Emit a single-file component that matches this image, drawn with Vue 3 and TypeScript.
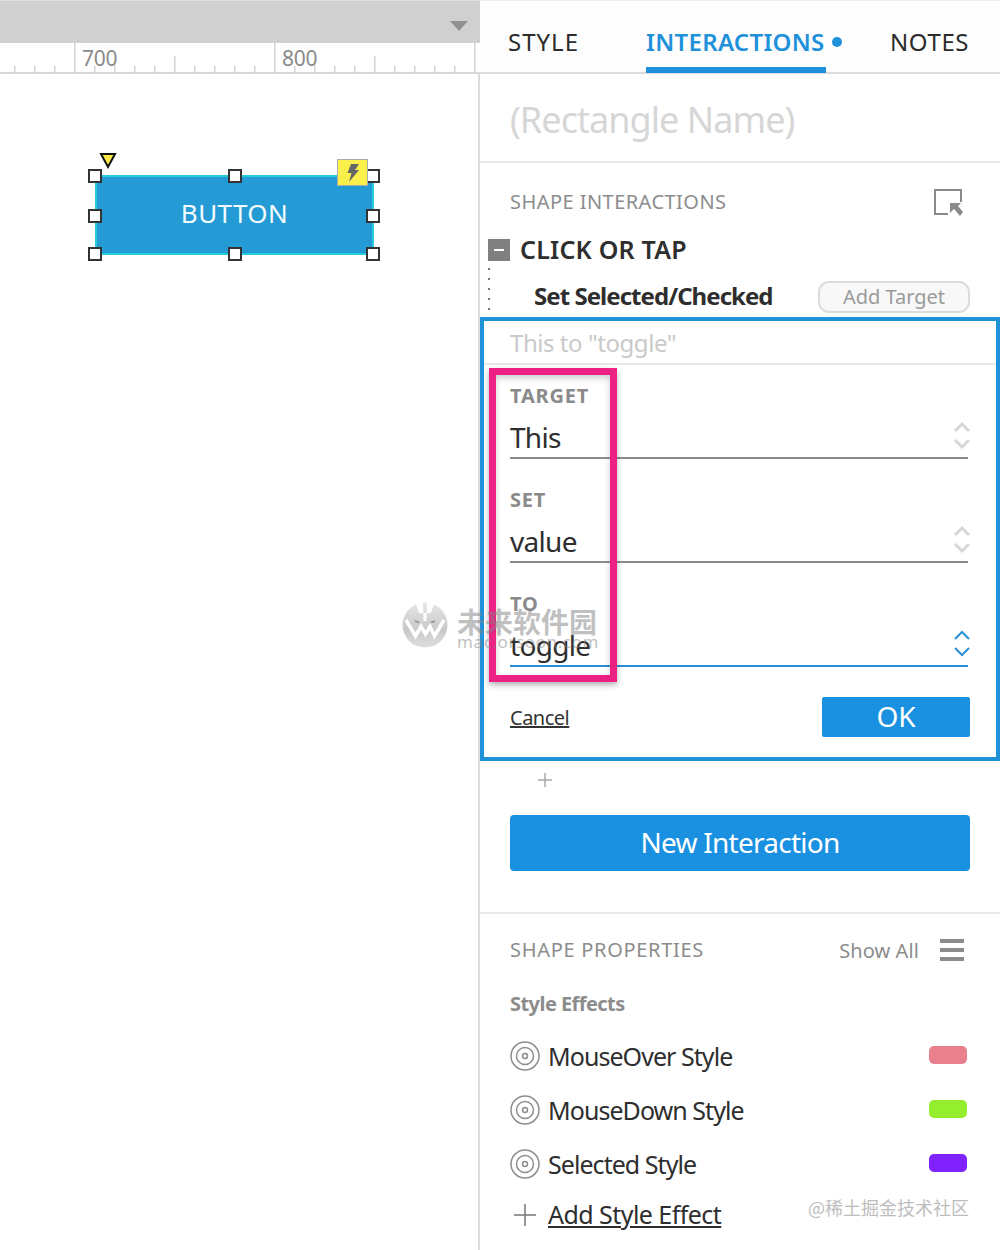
<script setup lang="ts">
const minor: number[] = []
for (let x = 15; x < 478; x += 20) minor.push(x)
const tickClass = (x: number) => {
  const step = (x - 75) / 100
  if (Number.isInteger(step)) return Math.abs(step % 2) === 0 ? 'major' : 'mid'
  return 'minor'
}
const handles = [
  [95, 176], [235, 176], [373, 176],
  [95, 216], [373, 216],
  [95, 254], [235, 254], [373, 254],
]
const fields = [
  { label: 'TARGET', value: 'This', active: false },
  { label: 'SET', value: 'value', active: false },
  { label: 'TO', value: 'toggle', active: true },
]
const effects = [
  { name: 'MouseOver Style', color: '#e8808d' },
  { name: 'MouseDown Style', color: '#94ee2e' },
  { name: 'Selected Style', color: '#7f22fb' },
]
</script>

<template>
  <div class="page">
    <section class="canvas">
      <div class="topbar"><span class="caret"></span></div>
      <div class="ruler">
        <span class="rule-num first">700</span>
        <span class="rule-num second">800</span>
        <svg class="ticks" width="478" height="31" viewBox="0 0 478 31">
          <rect v-for="x in minor" :key="x" :x="x - 1" width="1.500"
            :y="tickClass(x) === 'major' ? 0 : tickClass(x) === 'mid' ? 13 : 23"
            :height="tickClass(x) === 'major' ? 30 : tickClass(x) === 'mid' ? 17 : 7" fill="#d4d4d4" />
        </svg>
      </div>
      <div class="shape">BUTTON</div>
      <span v-for="(h, i) in handles" :key="i" class="handle" :style="{ left: h[0] - 7 + 'px', top: h[1] - 7 + 'px' }"></span>
      <svg class="marker" width="18" height="18" viewBox="0 0 18 18">
        <path d="M2 2 H16 L9 15 Z" fill="#fbe94a" stroke="#111" stroke-width="2" />
      </svg>
      <div class="bolt">
        <svg width="16" height="20" viewBox="0 0 16 20">
          <path d="M6 1 H14 L10 7 H14 L4 19 L6.500 10 H2.500 Z" fill="#666" />
        </svg>
      </div>
    </section>

    <aside class="panel">
      <nav class="tabs">
        <span class="tab tab-style">STYLE</span>
        <span class="tab tab-active">INTERACTIONS<i class="dot"></i></span>
        <span class="tab tab-notes">NOTES</span>
      </nav>
      <div class="name">(Rectangle Name)</div>

      <div class="section-head head-interactions">
        <span class="caption">SHAPE INTERACTIONS</span>
        <svg class="jump" width="30" height="28" viewBox="0 0 30 28">
          <path d="M28 14 V2 H2 V26 H15" fill="none" stroke="#8a8a8a" stroke-width="2" />
          <path d="M17 15 H28 L25 18 L30 24 L27 28 L21 21 L17 25 Z" fill="#8a8a8a" />
        </svg>
      </div>

      <div class="event">
        <span class="minus"><i></i></span>
        <span class="event-name">CLICK OR TAP</span>
      </div>
      <div class="action">
        <span class="dots"></span>
        <span class="action-name">Set Selected/Checked</span>
        <button class="add-target">Add Target</button>
      </div>

      <div class="editor">
        <div class="editor-title">This to "toggle"</div>
        <div class="fields">
          <div v-for="f in fields" :key="f.label" class="field">
            <div class="field-label">{{ f.label }}</div>
            <div class="field-value" :class="{ on: f.active }">
              <span class="value-text">{{ f.value }}</span>
              <svg class="spinner" width="18" height="30" viewBox="0 0 18 30" fill="none"
                :stroke="f.active ? '#2a90d6' : '#d6d6d6'" :stroke-width="f.active ? 2 : 2.800">
                <path d="M2 10 L9 3 L16 10" />
                <path d="M2 19 L9 26 L16 19" />
              </svg>
            </div>
          </div>
        </div>
        <div class="editor-foot">
          <a class="cancel">Cancel</a>
          <button class="ok">OK</button>
        </div>
      </div>

      <div class="plus-row">
        <svg width="16" height="16" viewBox="0 0 16 16"><path d="M8 1 V15 M1 8 H15" stroke="#a8a8a8" stroke-width="1.500" /></svg>
      </div>
      <button class="new-interaction">New Interaction</button>

      <div class="props">
        <div class="section-head head-props">
          <span class="caption">SHAPE PROPERTIES</span>
          <span class="show-all">
            <span>Show All</span>
            <span class="burger"><i></i><i></i><i></i></span>
          </span>
        </div>
        <div class="effects-title">Style Effects</div>
        <div v-for="e in effects" :key="e.name" class="effect">
          <svg width="30" height="30" viewBox="0 0 30 30" fill="none" stroke="#8e8e8e" stroke-width="1.500">
            <circle cx="15" cy="15" r="14" />
            <circle cx="15" cy="15" r="8.500" />
            <circle cx="15" cy="15" r="2.500" />
          </svg>
          <span class="effect-name">{{ e.name }}</span>
          <span class="swatch" :style="{ background: e.color }"></span>
        </div>
        <div class="add-effect">
          <svg width="30" height="24" viewBox="0 0 30 24"><path d="M15 1 V23 M4 12 H26" stroke="#777" stroke-width="1.500" /></svg>
          <a>Add Style Effect</a>
        </div>
      </div>
    </aside>

    <div class="pink"></div>

    <div class="watermark">
      <svg width="48" height="48" viewBox="0 0 48 48">
        <defs>
          <linearGradient id="wm-fill" x1="0" y1="0" x2="0" y2="1">
            <stop offset="0" stop-color="#e6e6e6" />
            <stop offset="0.6" stop-color="#c9c9c9" />
            <stop offset="1" stop-color="#dedede" />
          </linearGradient>
        </defs>
        <circle cx="24" cy="24" r="22.500" fill="url(#wm-fill)" />
        <path d="M14 0 H22 L22.500 20 H25.500 L26 0 H34 L30 12 H18 Z" fill="#fff" />
        <path d="M5 19 L14.500 35 L20 25.500 L24.500 33 L29 25.500 L33.500 35 L43 19" fill="none" stroke="#fff" stroke-width="3.500" />
        <path d="M14 20 L18 21.500 M30 21.500 L34 20" stroke="#8f8f8f" stroke-width="1.500" />
      </svg>
      <div class="wm-text">
        <div class="wm-cn">未来软件园</div>
        <div class="wm-en">mac.orsoon.com</div>
      </div>
    </div>
    <div class="credit">@稀土掘金技术社区</div>
  </div>
</template>

<style>
html, body { margin: 0; background: #fff; }
</style>

<style scoped>
.page {
  position: relative;
  display: flex;
  width: 1000px;
  height: 1250px;
  overflow: hidden;
  background: #fff;
  font-family: "Noto Sans", "Open Sans", sans-serif;
  color: #333;
}
.canvas {
  position: relative;
  width: 478px;
  flex: none;
  border-right: 2px solid #dcdcdc;
}
.topbar {
  position: relative;
  height: 42px;
  margin-right: -2px;
  background: #d0d0d0;
  border-top: 1px solid #dedede;
}
.caret {
  position: absolute;
  left: 450px;
  top: 20px;
  border-left: 9px solid transparent;
  border-right: 9px solid transparent;
  border-top: 10px solid #909090;
}
.ruler {
  position: relative;
  height: 31px;
  box-sizing: border-box;
  margin-right: -2px;
  background: #fff;
  border-bottom: 2px solid #d8d8d8;
}
.ticks { display: block; }
.rule-num {
  position: absolute;
  top: 1px;
  font-size: 21px;
  line-height: 28px;
  color: #8a8a8a;
  letter-spacing: -0.2px;
}
.first { left: 82px; }
.second { left: 282px; }
.shape {
  position: absolute;
  left: 95px;
  top: 175px;
  width: 279px;
  height: 80px;
  box-sizing: border-box;
  padding-bottom: 5px;
  display: flex;
  align-items: center;
  justify-content: center;
  background: #259bd5;
  border: 2px solid #24ccdc;
  color: #f4fbff;
  font-size: 26px;
  letter-spacing: 0.4px;
}
.handle {
  position: absolute;
  width: 14px;
  height: 14px;
  box-sizing: border-box;
  background: #fff;
  border: 2px solid #333;
}
.marker { position: absolute; left: 99px; top: 152px; }
.bolt {
  position: absolute;
  left: 337px;
  top: 159px;
  width: 31px;
  height: 27px;
  box-sizing: border-box;
  background: #fbef4c;
  border: 1px solid #aaa;
  display: flex;
  align-items: center;
  justify-content: center;
}
.panel {
  flex: 1;
  min-width: 0;
  background: #fff;
}
.tabs {
  height: 74px;
  box-sizing: border-box;
  border-bottom: 2px solid #dcdcdc;
  border-top: 1px solid #eee;
  background: #fdfdfd;
  display: flex;
  padding-left: 28px;
}
.tab {
  margin-top: 24px;
  font-size: 24px;
  line-height: 34px;
  letter-spacing: 0.6px;
  color: #2c2c2c;
}
.tab-style { width: 138px; letter-spacing: 1px; }
.tab-active {
  position: relative;
  display: flex;
  align-items: flex-start;
  width: 244px;
  height: 48px;
  color: #1f90da;
  font-weight: 600;
  letter-spacing: 0.3px;
}
.tab-active::after {
  content: "";
  position: absolute;
  left: 0;
  top: 42px;
  width: 180px;
  height: 6px;
  background: #1f90da;
}
.dot {
  width: 10px;
  height: 10px;
  margin: 12px 0 0 7px;
  border-radius: 50%;
  background: #1f90da;
  flex: none;
}
.name {
  height: 89px;
  box-sizing: border-box;
  border-bottom: 2px solid #e8e8e8;
  padding: 21px 0 0 30px;
  font-size: 36px;
  line-height: 50px;
  color: #d6d6d6;
  letter-spacing: -0.95px;
}
.section-head {
  display: flex;
  align-items: center;
  justify-content: space-between;
}
.head-interactions {
  height: 28px;
  margin-top: 25px;
  padding: 0 37px 0 30px;
}
.caption {
  font-size: 20px;
  line-height: 28px;
  color: #8c8c8c;
  letter-spacing: 0.45px;
}
.event {
  display: flex;
  align-items: center;
  gap: 10px;
  height: 30px;
  margin-top: 19px;
  padding-left: 8px;
  font-size: 25px;
  font-weight: 600;
  letter-spacing: 0.2px;
  color: #2e2e2e;
}
.event-name { margin-top: -2px; }
.minus {
  width: 22px;
  height: 22px;
  background: #808080;
  display: flex;
  align-items: center;
  justify-content: center;
}
.minus i {
  width: 10px;
  height: 2px;
  background: #fff;
}
.action {
  position: relative;
  display: flex;
  align-items: center;
  justify-content: space-between;
  height: 32px;
  margin-top: 16px;
  padding: 0 30px 0 54px;
}
.dots {
  position: absolute;
  left: 8px;
  top: -13px;
  width: 2px;
  height: 50px;
  background: repeating-linear-gradient(#777 0 2px, transparent 2px 10px);
}
.action-name {
  margin-top: -4px;
  font-size: 24px;
  font-weight: 700;
  letter-spacing: -0.95px;
  color: #2e2e2e;
}
.add-target {
  width: 152px;
  height: 32px;
  box-sizing: border-box;
  padding: 0 0 3px;
  border: 2px solid #dcdcdc;
  border-radius: 11px;
  background: #f8f8f8;
  font: inherit;
  font-size: 20px;
  color: #9a9a9a;
}
.editor {
  height: 444px;
  box-sizing: border-box;
  margin-top: 4px;
  border: 4px solid #1f92d8;
  display: flex;
  flex-direction: column;
}
.editor-title {
  height: 44px;
  flex: none;
  box-sizing: border-box;
  padding: 5px 0 0 26px;
  border-bottom: 2px solid #e8e8e8;
  font-size: 24px;
  line-height: 34px;
  letter-spacing: -0.45px;
  color: #c9c9c9;
}
.fields { padding: 0 28px 0 26px; }
.field {
  height: 104px;
}
.field-label {
  padding-top: 17px;
  font-size: 20px;
  line-height: 28px;
  font-weight: 700;
  letter-spacing: 0.8px;
  color: #8a8a8a;
}
.field-value {
  display: flex;
  align-items: flex-end;
  justify-content: space-between;
  height: 49px;
  box-sizing: border-box;
  border-bottom: 2px solid #8c8c8c;
  font-size: 28px;
  line-height: 38px;
  color: #2e2e2e;
  letter-spacing: -0.7px;
}
.value-text { margin-bottom: 1px; }
.field-value.on { border-bottom-color: #2a90d6; }
.spinner { margin-bottom: 6px; margin-right: -3px; }
.editor-foot {
  display: flex;
  align-items: center;
  justify-content: space-between;
  height: 40px;
  margin-top: 20px;
  padding: 0 26px 0 26px;
}
.cancel {
  font-size: 20px;
  letter-spacing: -0.5px;
  text-decoration: underline;
  color: #333;
}
.ok {
  width: 148px;
  height: 40px;
  padding: 0 0 2px;
  border: 0;
  border-radius: 2px;
  background: #1a91e0;
  color: #fff;
  font: inherit;
  font-size: 28px;
}
.plus-row {
  height: 38px;
  padding: 11px 0 0 57px;
  box-sizing: border-box;
  margin-bottom: 16px;
}
.plus-row svg { display: block; }
.new-interaction {
  display: block;
  width: 460px;
  height: 56px;
  margin-left: 30px;
  padding: 0 0 2px;
  border: 0;
  border-radius: 4px;
  background: #1a91e0;
  color: #fff;
  font: inherit;
  font-size: 28px;
  letter-spacing: -0.75px;
}
.props {
  margin-top: 41px;
  border-top: 2px solid #e8e8e8;
  padding: 0 30px;
}
.head-props {
  height: 28px;
  margin-top: 22px;
}
.head-props .caption { letter-spacing: 0.7px; }
.show-all {
  display: flex;
  align-items: center;
  gap: 21px;
  font-size: 20px;
  letter-spacing: 0.1px;
  color: #8c8c8c;
  padding-right: 6px;
}
.burger {
  display: flex;
  flex-direction: column;
  gap: 5px;
  width: 24px;
}
.burger i {
  height: 4px;
  background: #8c8c8c;
}
.effects-title {
  margin-top: 26px;
  height: 28px;
  font-size: 20px;
  line-height: 28px;
  font-weight: 700;
  letter-spacing: -0.55px;
  color: #8c8c8c;
}
.effect {
  display: flex;
  align-items: center;
  height: 30px;
  margin-top: 24px;
  font-size: 25px;
  letter-spacing: -0.95px;
  color: #2e2e2e;
}
.effects-title + .effect { margin-top: 23px; }
.effect-name {
  flex: 1;
  margin-left: 8px;
}
.swatch {
  width: 38px;
  height: 18px;
  margin-right: 3px;
  margin-top: -2px;
  border-radius: 5px;
}
.add-effect {
  display: flex;
  align-items: center;
  gap: 8px;
  height: 30px;
  margin-top: 21px;
  font-size: 25px;
  letter-spacing: -0.55px;
  color: #2e2e2e;
}
.add-effect a { text-decoration: underline; margin-top: -2px; }
.pink {
  position: absolute;
  left: 489px;
  top: 368px;
  width: 128px;
  height: 314px;
  box-sizing: border-box;
  border: 7px solid #ec2184;
  box-shadow: 0 3px 6px rgba(0, 0, 0, 0.3), inset 0 3px 6px rgba(0, 0, 0, 0.2);
}
.watermark {
  position: absolute;
  left: 401px;
  top: 601px;
  display: flex;
  gap: 8px;
  color: rgba(130, 130, 130, 0.5);
}
.wm-text { padding-top: 5px; }
.wm-cn {
  font-family: "Noto Sans CJK SC", sans-serif;
  font-size: 28px;
  line-height: 30px;
  font-weight: 700;
  white-space: nowrap;
}
.wm-en {
  margin-top: -2px;
  font-size: 17px;
  line-height: 16px;
  letter-spacing: 0.6px;
  white-space: nowrap;
}
.credit {
  position: absolute;
  left: 808px;
  top: 1194px;
  font-family: "Noto Sans CJK SC", sans-serif;
  font-size: 18px;
  line-height: 26px;
  color: #bdbdbd;
  white-space: nowrap;
}
</style>
